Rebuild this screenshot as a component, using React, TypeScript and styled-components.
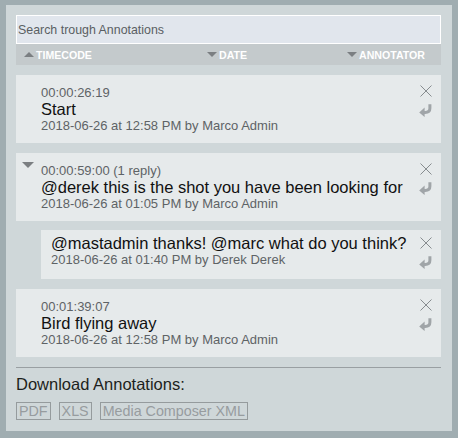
import React from 'react'
import styled, { createGlobalStyle } from 'styled-components'

const GlobalStyle = createGlobalStyle`
    body {
        margin: 0;
        background-color: #a0adb1;
        font-family: "Liberation Sans", Arial, sans-serif;
    }
`

const Panel = styled.div`
    margin: 5px 6px;
    width: 446px;
    box-sizing: border-box;
    padding: 10px 11px 11px 10px;
    background-color: #cfd7d9;
`

const SearchInput = styled.input`
    display: block;
    box-sizing: border-box;
    width: 100%;
    height: 29px;
    margin: 0;
    padding: 0 1px;
    border: 1px solid #ffffff;
    background-color: #e1e6ed;
    font-family: inherit;
    font-size: 12.4px;
    color: #555;
    outline: none;

    &::placeholder {
        color: #5a5f63;
    }
`

const SortBar = styled.div`
    height: 21px;
    background-color: #c4cacc;
    display: grid;
    grid-template-columns: 183px 140px 1fr;
    align-items: center;
    padding-left: 8px;
`

const SortItem = styled.div`
    display: flex;
    align-items: center;
    gap: 2px;
    color: #ffffff;
    font-size: 10.6px;
    font-weight: bold;
`

const Triangle = styled.span<{ $up?: boolean; $size?: number }>`
    width: 0;
    height: 0;
    border-left: ${p => (p.$size || 10) / 2}px solid transparent;
    border-right: ${p => (p.$size || 10) / 2}px solid transparent;
    ${p => p.$up
        ? `border-bottom: ${(p.$size || 10) / 2}px solid #7b7f82;`
        : `border-top: ${(p.$size || 10) / 2}px solid #7b7f82;`}
`

const List = styled.div`
    display: flex;
    flex-direction: column;
    margin-top: 10px;
`

const Card = styled.div<{ $reply?: boolean }>`
    position: relative;
    background-color: #e6eaeb;
    margin-left: ${p => (p.$reply ? '25px' : '0')};
    margin-top: ${p => (p.$reply ? '9px' : '10px')};
    padding: ${p => (p.$reply ? '4px 30px 11px 10px' : '10px 30px 9px 25px')};

    &:first-child {
        margin-top: 0;
    }
`

const Toggle = styled.span`
    position: absolute;
    left: 6px;
    top: 15px;
`

const Timecode = styled.div`
    font-size: 13px;
    line-height: 15px;
    color: #5e6366;
`

const Title = styled.div`
    font-size: 16.5px;
    line-height: 18px;
    color: #111;
`

const Meta = styled.div`
    font-size: 13px;
    line-height: 16px;
    color: #5e6366;
`

const Actions = styled.div<{ $reply?: boolean }>`
    position: absolute;
    right: 9px;
    top: ${p => (p.$reply ? '7px' : '10px')};
    display: flex;
    flex-direction: column;
    align-items: center;
    gap: 7px;
`

const Separator = styled.hr`
    margin: 10px 0 0;
    border: none;
    border-top: 1px solid #999fa2;
`

const DownloadTitle = styled.div`
    margin-top: 7px;
    font-size: 16.5px;
    line-height: 19px;
    color: #1d1f20;
`

const Formats = styled.div`
    display: flex;
    gap: 8px;
    margin-top: 8px;
`

const FormatButton = styled.button`
    box-sizing: border-box;
    height: 18px;
    padding: 0 2px;
    border: 1px solid #959b9d;
    background: transparent;
    color: #979c9f;
    font-family: inherit;
    font-size: 14.3px;
    line-height: 16px;
`

function CloseIcon() {
    return (
        <svg width="12" height="12" viewBox="0 0 12 12">
            <path d="M0.5 0.5L11.5 11.5M11.5 0.5L0.5 11.5" stroke="#878c8f" strokeWidth="1" fill="none" />
        </svg>
    )
}

function ReplyIcon() {
    return (
        <svg width="13" height="13" viewBox="0 0 13 13">
            <path d="M10.9 0.3 V4.3 Q10.9 8.4 6.2 8.4 H4.5" stroke="#a0a5a8" strokeWidth="3" fill="none" />
            <path d="M0.2 8.4 L5.6 3.6 L5.6 13 Z" fill="#a0a5a8" />
        </svg>
    )
}

type Annotation = {
    timecode?: string
    text: string
    meta: string
    reply?: boolean
    expanded?: boolean
}

const annotations: Annotation[] = [
    { timecode: '00:00:26:19', text: 'Start', meta: '2018-06-26 at 12:58 PM by Marco Admin' },
    {
        timecode: '00:00:59:00 (1 reply)',
        text: '@derek this is the shot you have been looking for',
        meta: '2018-06-26 at 01:05 PM by Marco Admin',
        expanded: true,
    },
    {
        text: '@mastadmin thanks! @marc what do you think?',
        meta: '2018-06-26 at 01:40 PM by Derek Derek',
        reply: true,
    },
    { timecode: '00:01:39:07', text: 'Bird flying away', meta: '2018-06-26 at 12:58 PM by Marco Admin' },
]

export default function App() {
    return (
        <>
            <GlobalStyle />
            <Panel>
                <SearchInput placeholder="Search trough Annotations" />
                <SortBar>
                    <SortItem><Triangle $up />TIMECODE</SortItem>
                    <SortItem><Triangle />DATE</SortItem>
                    <SortItem><Triangle />ANNOTATOR</SortItem>
                </SortBar>
                <List>
                    {annotations.map((a, i) => (
                        <Card key={i} $reply={a.reply}>
                            {a.expanded && <Toggle><Triangle $size={12} /></Toggle>}
                            {a.timecode && <Timecode>{a.timecode}</Timecode>}
                            <Title>{a.text}</Title>
                            <Meta>{a.meta}</Meta>
                            <Actions $reply={a.reply}>
                                <CloseIcon />
                                <ReplyIcon />
                            </Actions>
                        </Card>
                    ))}
                </List>
                <Separator />
                <DownloadTitle>Download Annotations:</DownloadTitle>
                <Formats>
                    <FormatButton>PDF</FormatButton>
                    <FormatButton>XLS</FormatButton>
                    <FormatButton>Media Composer XML</FormatButton>
                </Formats>
            </Panel>
        </>
    )
}
